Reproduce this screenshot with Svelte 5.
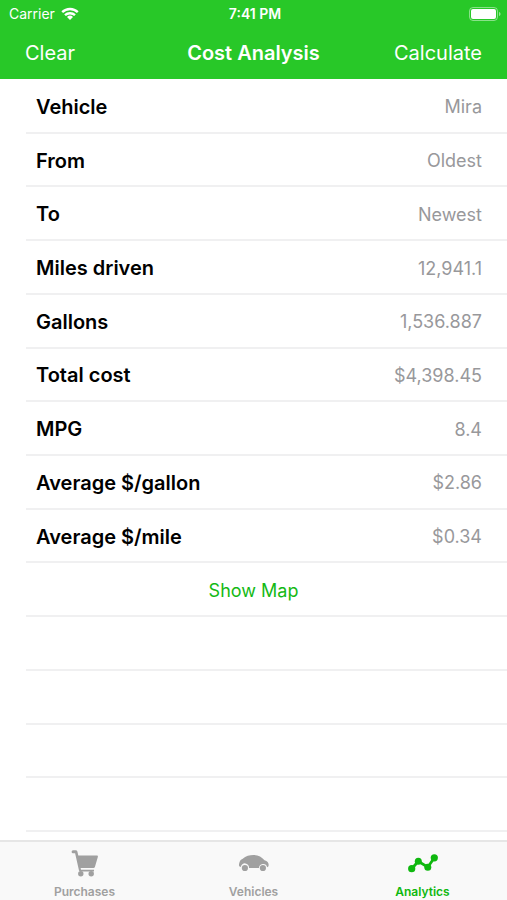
<script lang="ts">
  // Cost analysis screen: totals for the chosen vehicle and date range.

  type Row = { label: string; value: string };

  const rows: Row[] = [
    { label: 'Vehicle', value: 'Mira' },
    { label: 'From', value: 'Oldest' },
    { label: 'To', value: 'Newest' },
    { label: 'Miles driven', value: '12,941.1' },
    { label: 'Gallons', value: '1,536.887' },
    { label: 'Total cost', value: '$4,398.45' },
    { label: 'MPG', value: '8.4' },
    { label: 'Average $/gallon', value: '$2.86' },
    { label: 'Average $/mile', value: '$0.34' }
  ];

  const tabs = ['Purchases', 'Vehicles', 'Analytics'];
  let active = $state('Analytics');
</script>

<div class="screen">
  <header>
    <div class="status">
      <span class="carrier">
        Carrier
        <svg width="18" height="13" viewBox="0 0 18 13" aria-hidden="true">
          <g fill="none" stroke="#fff" stroke-width="2.4">
            <path d="M1.2 5.1a11.2 11.2 0 0 1 15.6 0" />
            <path d="M4 8.2a7.2 7.2 0 0 1 10 0" />
          </g>
          <path d="M9 13 6 10a4.3 4.3 0 0 1 6 0z" fill="#fff" />
        </svg>
      </span>
      <time>7:41 PM</time>
      <svg class="battery" width="32" height="14" viewBox="0 0 32 14" aria-hidden="true">
        <rect x="0.5" y="0.5" width="28" height="13" rx="3.5" fill="none" stroke="#fff" stroke-opacity="0.45" />
        <rect x="2" y="2" width="25" height="10" rx="2" fill="#fff" />
        <path d="M30 5c2 .5 2 3.5 0 4z" fill="#fff" fill-opacity="0.5" />
      </svg>
    </div>
    <nav class="bar">
      <button type="button">Clear</button>
      <h1>Cost Analysis</h1>
      <button type="button">Calculate</button>
    </nav>
  </header>

  <main>
    <dl>
      {#each rows as row}
        <div class="row">
          <dt>{row.label}</dt>
          <dd>{row.value}</dd>
        </div>
      {/each}
    </dl>
    <div class="row action">
      <button type="button">Show Map</button>
    </div>
    {#each { length: 4 } as _}
      <div class="row" aria-hidden="true"></div>
    {/each}
  </main>

  <nav class="tabs">
    {#each tabs as tab}
      <button
        type="button"
        class:active={tab === active}
        aria-current={tab === active ? 'page' : undefined}
        onclick={() => (active = tab)}
      >
        <svg width="32" height="30" viewBox="0 0 32 30" fill="currentColor" aria-hidden="true">
          {#if tab === 'Purchases'}
            <path d="M4 .3h2.700q1.300 0 1.700 1.300L9.300 5.500H28q1.200 0 .9 1.200l-3 10.300q-.4 1-1.400 1H11.600l.4 1.700h13v1.800H11.400q-1.100 0-1.400-1.100L6.100 3.300H4q-1.400 0-1.400-1.500T4 .3z" />
            <circle cx="11.8" cy="23.700" r="2.700" />
            <circle cx="22.2" cy="23.700" r="2.700" />
          {:else if tab === 'Vehicles'}
            <path d="M2.200 16.800q-1.400-.4-1.200-2c.5-4 1.600-5.200 3.400-5.900C8 5.800 11.500 5 15.500 5c5 0 8.300 2 11 5.300 3 .7 4 2.200 4.200 4.700q0 2-1.600 2.200a4.100 4.100 0 0 0-8.100 .8H11A4.100 4.100 0 0 0 2.800 17z" />
            <circle cx="6.900" cy="18" r="3.100" />
            <circle cx="24.900" cy="18" r="3.100" />
          {:else}
            <path d="M4.700 18.700 11.300 11.300 20.800 17.200 27.300 7.800" fill="none" stroke="currentColor" stroke-width="2.800" />
            <circle cx="4.700" cy="18.700" r="3.600" />
            <circle cx="11.300" cy="11.300" r="3.500" />
            <circle cx="20.800" cy="17.200" r="3.500" />
            <circle cx="27.300" cy="7.800" r="3.600" />
          {/if}
        </svg>
        {tab}
      </button>
    {/each}
  </nav>
</div>

<style>
  :global(body) {
    background: #fff;
  }

  .screen {
    display: flex;
    flex-direction: column;
    min-height: 100vh;
    font-family: Inter, 'Liberation Sans', sans-serif;
    font-size: 18px;
  }

  button {
    padding: 0;
    border: 0;
    background: none;
    color: inherit;
    font: inherit;
    cursor: pointer;
  }

  header {
    background: #28c828;
    color: #fff;
  }

  .status,
  .bar {
    display: grid;
    grid-template-columns: 1fr auto 1fr;
    align-items: center;
  }

  .status {
    height: 27px;
    padding: 0 6px 0 9px;
    font-size: 14px;
  }

  .carrier {
    display: flex;
    align-items: center;
    gap: 6px;
  }

  time {
    font-weight: 600;
  }

  .battery {
    justify-self: end;
  }

  .bar {
    height: 52px;
    padding: 0 25px;
    font-size: 20px;
  }

  .bar button:first-child {
    justify-self: start;
  }

  .bar button:last-child {
    justify-self: end;
  }

  h1 {
    margin: 0;
    font-size: 20px;
    font-weight: 600;
  }

  main {
    flex: 1;
    display: flex;
    flex-direction: column;
    padding: 1px 0 8px 26px;
  }

  /* the rows share the height of main with the ones below the list */
  dl {
    display: contents;
  }

  .row {
    flex: 1 0 0;
    box-sizing: border-box;
    min-height: 44px;
    display: flex;
    align-items: center;
    justify-content: space-between;
    padding: 2px 25px 0 10px;
    border-bottom: 2px solid #f0f0f1;
  }

  dt {
    font-size: 20px;
    font-weight: 600;
  }

  dd {
    margin: 0;
    color: #98989b;
  }

  .action {
    justify-content: center;
    padding: 2px 26px 0 0;
    color: #14b914;
  }

  .tabs {
    display: grid;
    grid-template-columns: repeat(3, 1fr);
    height: 60px;
    box-sizing: border-box;
    border-top: 2px solid #e6e6e6;
    background: #f9f9f9;
    color: #a0a0a0;
    font-size: 12px;
    font-weight: 600;
  }

  .tabs button {
    display: flex;
    flex-direction: column;
    align-items: center;
    gap: 4px;
    padding-top: 8px;
    line-height: 16px;
  }

  .tabs .active {
    color: #0fb80f;
  }
</style>
